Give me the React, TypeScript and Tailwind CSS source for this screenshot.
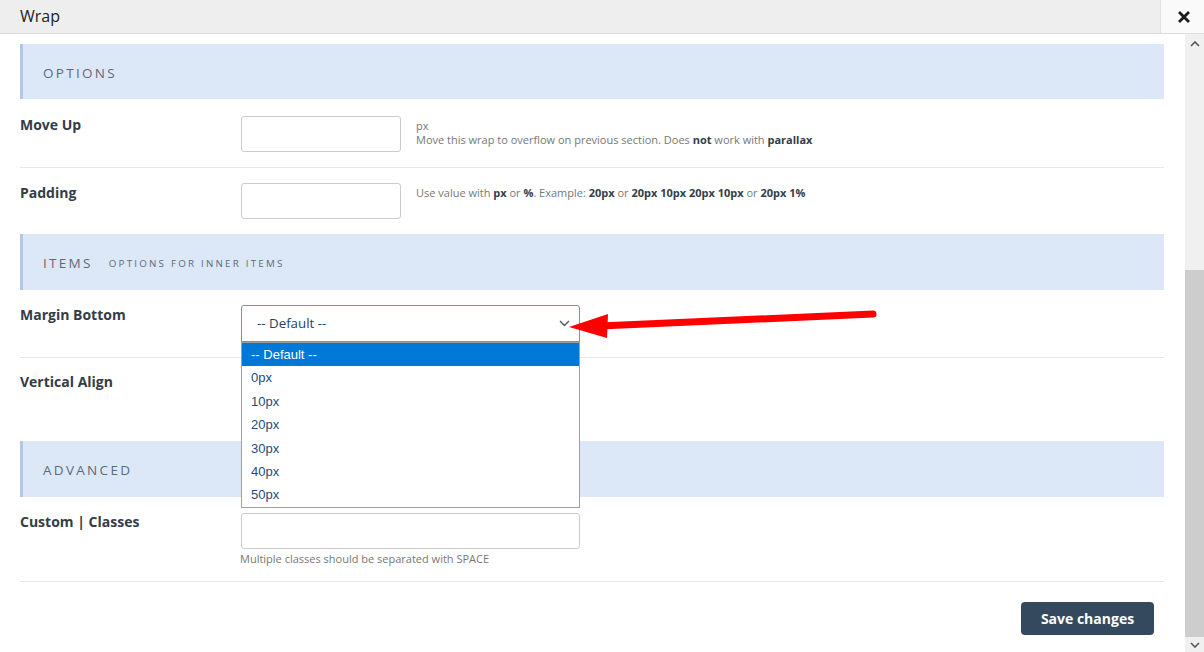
import React from "react";

const SectionHeader = ({ title, sub, h = "h-[56px]" }: { title: string; sub?: string; h?: string }) => (
  <div className={`${h} bg-[#dce7f7] border-l-[3px] border-[#b3c7e5] flex items-center pl-5 pt-[3px]`}>
    <span className="text-[13.5px] tracking-[2.3px] text-[#5c6b7a]">{title}</span>
    {sub && <span className="ml-[16px] text-[9.8px] tracking-[2.2px] text-[#5c6b7a] mt-[2px]">{sub}</span>}
  </div>
);

const Label = ({ children, top = "mt-0" }: { children: React.ReactNode; top?: string }) => (
  <div className={`w-[221px] shrink-0 text-[14px] leading-[20px] font-bold text-[#333d47] ${top}`}>{children}</div>
);

export default function App() {
  const options = ["-- Default --", "0px", "10px", "20px", "30px", "40px", "50px"];
  return (
    <div
      className="w-[1204px] h-[652px] overflow-hidden bg-white relative"
      style={{ fontFamily: '"Open Sans", "Noto Sans", sans-serif' }}
    >
      <header className="h-[34px] flex border-b border-[#dddddd] bg-[#eeeeee]">
        <div className="flex-1 pl-5 flex items-center text-[16px] text-[#222] pb-[1px]">Wrap</div>
        <div className="w-[44px] bg-[#fafafa] border-l border-[#e2e2e2] flex items-center justify-center pl-[2px]">
          <svg width="12" height="12" viewBox="0 0 12 12">
            <path d="M2 2 L10 10 M10 2 L2 10" stroke="#1c1c1c" strokeWidth="2.8" strokeLinecap="square" />
          </svg>
        </div>
      </header>
      <div className="flex h-[618px]">
        <main className="flex-1 pl-5 pr-[21px] pt-[10px]">
          <SectionHeader title="OPTIONS" h="h-[55px]" />

          {/* Move Up */}
          <div className="flex pt-[17px] pb-[15px] border-b border-[#e8e8e8]">
            <Label top="-mt-[1px]">Move Up</Label>
            <div className="w-[160px] h-[36px] border border-[#cccccc] rounded-[3px] shrink-0" />
            <div className="ml-[15px] mt-[3px] text-[11px] leading-[14px] text-[#777]">
              <div>px</div>
              <div>
                Move this wrap to overflow on previous section. Does <b className="text-[#333d47]">not</b> work with{" "}
                <b className="text-[#333d47]">parallax</b>
              </div>
            </div>
          </div>

          {/* Padding */}
          <div className="flex pt-[15px] pb-[15px]">
            <Label>Padding</Label>
            <div className="w-[160px] h-[36px] border border-[#cccccc] rounded-[3px] shrink-0" />
            <div className="ml-[15px] mt-[3px] text-[11px] leading-[14px] text-[#777]">
              Use value with <b className="text-[#333d47]">px</b> or <b className="text-[#333d47]">%</b>. Example:{" "}
              <b className="text-[#333d47]">20px</b> or <b className="text-[#333d47]">20px 10px 20px 10px</b> or{" "}
              <b className="text-[#333d47]">20px 1%</b>
            </div>
          </div>

          <SectionHeader title="ITEMS" sub="OPTIONS FOR INNER ITEMS" />

          {/* Margin Bottom */}
          <div className="flex pt-[15px] pb-[15px] border-b border-[#e8e8e8]">
            <Label>Margin Bottom</Label>
            <div className="relative w-[339px] h-[37px] shrink-0">
              <div className="h-full border border-[#6b93c2] rounded-t-[3px] flex items-center justify-between pl-[15px] pr-[9px] text-[13.3px] text-[#1b4468]">
                <span>-- Default --</span>
                <svg width="11" height="7" viewBox="0 0 11 7">
                  <path d="M1 1 L5.5 5.5 L10 1" stroke="#555" strokeWidth="1.4" fill="none" />
                </svg>
              </div>
              <div
                className="absolute left-0 top-full w-full bg-white border border-[#a0a0a0] z-10"
                style={{ fontFamily: '"Liberation Sans", Arial, sans-serif' }}
              >
                {options.map((o, i) => (
                  <div
                    key={o}
                    className={`h-[23.4px] leading-[23.4px] pl-[9px] text-[13px] ${
                      i === 0 ? "bg-[#0078d7] text-white" : "text-[#1f4a80]"
                    }`}
                  >
                    {o}
                  </div>
                ))}
              </div>
            </div>
          </div>

          {/* Vertical Align */}
          <div className="flex h-[83px] pt-[14px]">
            <Label>Vertical Align</Label>
            <div className="w-[339px] h-[37px] border border-[#cccccc] rounded-[3px] shrink-0" />
          </div>

          <SectionHeader title="ADVANCED" />

          {/* Custom Classes */}
          <div className="flex pt-[16px] pb-[15px] border-b border-[#e8e8e8]">
            <Label top="-mt-[1px]">Custom | Classes</Label>
            <div>
              <div className="w-[339px] h-[36px] border border-[#cccccc] rounded-[3px]" />
              <div className="mt-[3px] -ml-[1px] text-[11px] leading-[14px] text-[#777]">
                Multiple classes should be separated with SPACE
              </div>
            </div>
          </div>

          <div className="flex justify-end pr-[10px] pt-[20px]">
            <button className="h-[33px] w-[133px] bg-[#34495e] rounded-[4px] text-white text-[14px] font-bold">
              Save changes
            </button>
          </div>
        </main>

        {/* Scrollbar */}
        <div className="w-[19px] bg-[#f0f0f0] flex flex-col">
          <div className="h-[17px] flex items-center justify-center pt-[3px]">
            <svg width="10" height="6" viewBox="0 0 10 6">
              <path d="M1 5 L5 1 L9 5" stroke="#555" strokeWidth="1.6" fill="none" />
            </svg>
          </div>
          <div className="h-[219px]" />
          <div className="h-[367px] bg-[#cdcdcd]" />
          <div className="h-[15px] flex items-center justify-center">
            <svg width="10" height="6" viewBox="0 0 10 6">
              <path d="M1 1 L5 5 L9 1" stroke="#555" strokeWidth="1.6" fill="none" />
            </svg>
          </div>
        </div>
      </div>

      {/* Red annotation arrow */}
      <svg className="absolute left-0 top-0 pointer-events-none z-20" width="1204" height="652">
        <line x1="600" y1="326" x2="873" y2="314" stroke="#ff0000" strokeWidth="7" strokeLinecap="round" />
        <polygon points="569,327 608,314 607,338" fill="#ff0000" />
      </svg>
    </div>
  );
}
